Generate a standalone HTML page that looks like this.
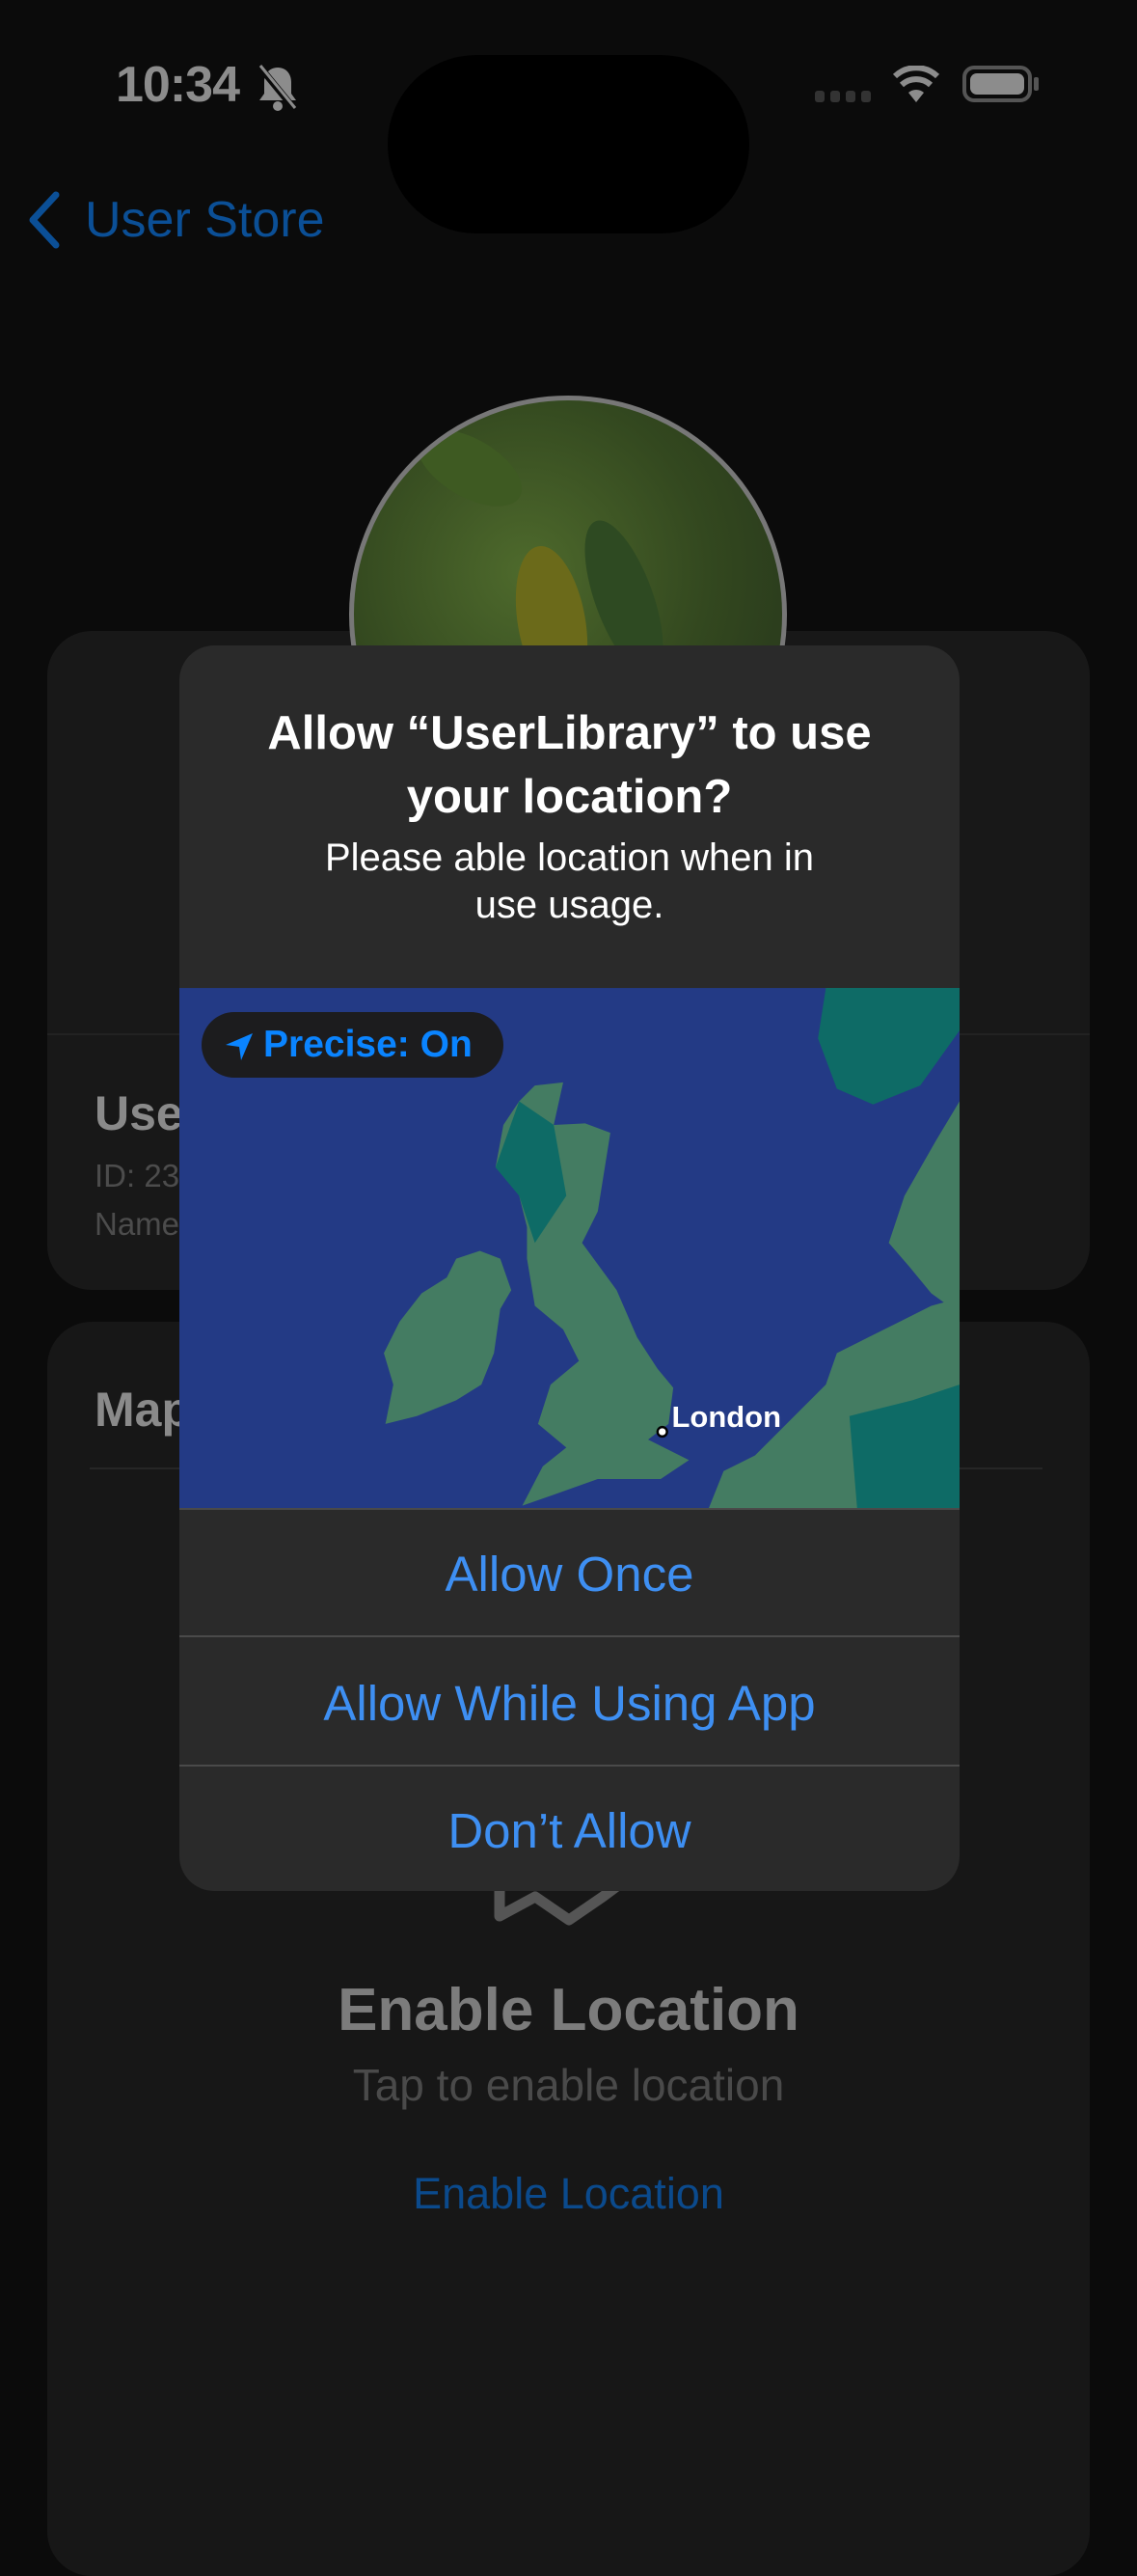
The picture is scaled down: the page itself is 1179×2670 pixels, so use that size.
<!DOCTYPE html>
<html><head><meta charset="utf-8"><style>
*{margin:0;padding:0;box-sizing:border-box}
body{width:1179px;height:2556px;background:#0b0b0b;position:relative;overflow:hidden;font-family:"Liberation Sans",sans-serif}
.abs{position:absolute}
.c{text-align:center;width:100%;left:0}
</style></head><body>
<!-- status bar -->
<div class="abs" style="left:120px;top:58px;font-size:52px;font-weight:bold;color:#8c8c8c;letter-spacing:-1px">10:34</div>
<svg class="abs" style="left:266px;top:66px" width="44" height="50" viewBox="0 0 44 50"><path d="M22 4c-9 0-14 7-14 15v12l-5 7h38l-5-7V19C36 11 31 4 22 4z" fill="#8c8c8c"/><circle cx="22" cy="44" r="5" fill="#8c8c8c"/><line x1="4" y1="4" x2="40" y2="48" stroke="#0b0b0b" stroke-width="7"/><line x1="4" y1="2" x2="40" y2="46" stroke="#8c8c8c" stroke-width="3"/></svg>
<div class="abs" style="left:402px;top:57px;width:375px;height:185px;background:#000;border-radius:92px"></div>
<div class="abs" style="left:845px;top:94px;width:10px;height:12px;background:#333;border-radius:3px"></div>
<div class="abs" style="left:861px;top:94px;width:10px;height:12px;background:#333;border-radius:3px"></div>
<div class="abs" style="left:877px;top:94px;width:10px;height:12px;background:#333;border-radius:3px"></div>
<div class="abs" style="left:893px;top:94px;width:10px;height:12px;background:#333;border-radius:3px"></div>
<svg class="abs" style="left:925px;top:68px" width="50" height="40" viewBox="0 0 50 40"><path d="M25 38 L17 28 A12 12 0 0 1 33 28 Z" fill="#8c8c8c"/><path d="M10 20 A22 22 0 0 1 40 20" stroke="#8c8c8c" stroke-width="6" fill="none"/><path d="M3 11 A32 32 0 0 1 47 11" stroke="#8c8c8c" stroke-width="6" fill="none"/></svg>
<div class="abs" style="left:998px;top:68px;width:72px;height:38px;border:4px solid #555;border-radius:12px;padding:4px"><div style="width:100%;height:100%;background:#8c8c8c;border-radius:7px"></div></div>
<div class="abs" style="left:1072px;top:80px;width:5px;height:14px;background:#555;border-radius:2px"></div>
<!-- nav -->
<svg class="abs" style="left:26px;top:198px" width="40" height="60" viewBox="0 0 40 60"><path d="M32 4 L8 30 L32 56" stroke="#0b4f96" stroke-width="7" fill="none" stroke-linecap="round" stroke-linejoin="round"/></svg>
<div class="abs" style="left:88px;top:198px;font-size:52px;color:#0b4f96;line-height:60px">User Store</div>
<!-- card1 -->
<div class="abs" style="left:49px;top:654px;width:1081px;height:683px;background:#181818;border-radius:46px"></div>
<div class="abs" style="left:49px;top:1071px;width:1081px;height:2px;background:#222"></div>
<div class="abs" style="left:98px;top:1125px;font-size:50px;font-weight:bold;color:#8a8a8a">User</div>
<div class="abs" style="left:98px;top:1200px;font-size:33px;color:#4c4c4c">ID: 23</div>
<div class="abs" style="left:98px;top:1250px;font-size:33px;color:#4c4c4c">Name</div>
<!-- avatar -->
<div class="abs" style="left:362px;top:410px;width:454px;height:454px;border-radius:50%;border:5px solid #777;background:radial-gradient(circle at 40% 40%,#4e6a2c,#33481f 50%,#22301a);overflow:hidden">
<div class="abs" style="left:170px;top:150px;width:70px;height:160px;background:#6b6a1a;border-radius:50%;transform:rotate(-10deg)"></div>
<div class="abs" style="left:60px;top:40px;width:120px;height:60px;background:#3e5a22;border-radius:50%;transform:rotate(30deg)"></div>
<div class="abs" style="left:250px;top:120px;width:60px;height:170px;background:#2e4a22;border-radius:50%;transform:rotate(-20deg)"></div>
</div>
<!-- card2 -->
<div class="abs" style="left:49px;top:1370px;width:1081px;height:1300px;background:#171717;border-radius:46px"></div>
<div class="abs" style="left:98px;top:1432px;font-size:50px;font-weight:bold;color:#8a8a8a">Map</div>
<div class="abs" style="left:93px;top:1521px;width:988px;height:2px;background:#262626"></div>
<svg class="abs" style="left:510px;top:1940px" width="160" height="60" viewBox="0 0 160 60"><path d="M8 0 V46 L45 26 L80 50 L115 26 L150 0" stroke="#555" stroke-width="11" fill="none" stroke-linejoin="round" stroke-linecap="round"/></svg>
<div class="abs c" style="top:2048px;font-size:62px;font-weight:bold;color:#7c7c7c">Enable Location</div>
<div class="abs c" style="top:2134px;font-size:46px;color:#4a4a4a">Tap to enable location</div>
<div class="abs c" style="top:2248px;font-size:45px;color:#0b4a8c">Enable Location</div>
<!-- dialog -->
<div class="abs" style="left:186px;top:669px;width:809px;height:1291px;background:#2a2a2a;border-radius:36px;overflow:hidden">
<div class="abs c" style="top:58px;font-size:49px;font-weight:bold;color:#fff;line-height:66px">Allow “UserLibrary” to use<br>your location?</div>
<div class="abs c" style="top:196px;font-size:40px;color:#fff;line-height:49px">Please able location when in<br>use usage.</div>
<svg class="abs" style="left:0;top:355px" width="809" height="540" viewBox="0 0 496 331">
<rect width="496" height="331" fill="#233a85"/>
<g transform="translate(-114,-628)">
<path d="M525 628 L610 628 L610 655 L585 690 L555 702 L532 692 L520 660 Z" fill="#0e6b66"/>
<path d="M565 790 L575 760 L595 725 L610 700 L610 835 L592 822 L578 805 Z" fill="#447c62"/>
<path d="M340 690 L358 688 L352 715 L372 714 L388 720 L380 770 L370 790 L392 820 L405 850 L418 870 L428 882 L425 905 L412 915 L438 928 L420 940 L380 940 L352 950 L332 957 L345 932 L360 920 L342 905 L350 880 L368 865 L358 845 L340 830 L335 800 L335 780 L328 752 L315 742 L320 715 L330 700 Z" fill="#447c62"/>
<path d="M330 700 L352 715 L360 760 L340 790 L330 760 L315 742 Z" fill="#0e6b66"/>
<path d="M290 800 L305 795 L318 800 L325 820 L318 832 L314 860 L306 880 L290 890 L265 900 L245 905 L250 880 L244 860 L254 840 L268 822 L284 812 Z" fill="#447c62"/>
<path d="M450 960 L460 935 L480 925 L500 905 L525 880 L532 860 L552 850 L572 840 L592 830 L610 825 L610 960 Z" fill="#447c62"/>
<path d="M540 900 L580 890 L610 880 L610 960 L545 960 Z" fill="#0e6b66"/>
</g>
<circle cx="307" cy="282" r="3" fill="#fff" stroke="#000" stroke-width="1.5"/>
<text x="313" y="279" font-family="Liberation Sans" font-weight="bold" font-size="19" fill="#fff">London</text>
</svg>
<div class="abs" style="left:23px;top:380px;width:313px;height:68px;background:#1c1c1e;border-radius:34px"></div>
<svg class="abs" style="left:46px;top:400px" width="32" height="32" viewBox="0 0 32 32"><path d="M30 2 L2 14 L16 16 L18 30 Z" fill="#0a84ff"/></svg>
<div class="abs" style="left:87px;top:392px;font-size:39px;font-weight:bold;color:#0a84ff">Precise: On</div>
<div class="abs" style="left:0;top:894px;width:809px;height:2px;background:#4a4a4a"></div>
<div class="abs c" style="top:933px;font-size:51px;color:#3e8ff2">Allow Once</div>
<div class="abs" style="left:0;top:1026px;width:809px;height:2px;background:#4a4a4a"></div>
<div class="abs c" style="top:1067px;font-size:51px;color:#3e8ff2">Allow While Using App</div>
<div class="abs" style="left:0;top:1160px;width:809px;height:2px;background:#4a4a4a"></div>
<div class="abs c" style="top:1199px;font-size:51px;color:#3e8ff2">Don’t Allow</div>
</div>
</body></html>
